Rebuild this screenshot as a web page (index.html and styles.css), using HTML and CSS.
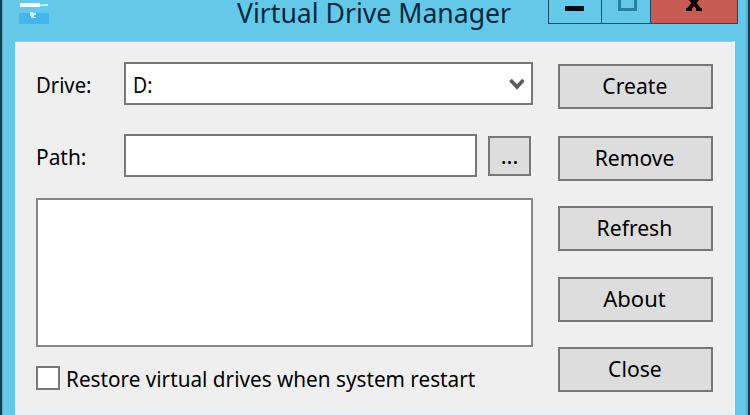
FILE: index.html
```html
<!DOCTYPE html>
<html lang="en">
<head>
<meta charset="utf-8">
<title>Virtual Drive Manager</title>
<link rel="stylesheet" href="styles.css">
</head>
<body>
<div class="window">
  <header class="titlebar">
    <svg class="app-icon" width="34" height="26" viewBox="0 0 34 26">
      <path d="M2 3 Q15 6 30 4 V6 H2Z" fill="#c5f5fa"/>
      <path d="M2 3H22V7H2Z" fill="#f2ffff"/>
      <path d="M1 8H31V24H1Z" fill="#45b6ed"/>
      <path d="M1 8H31V13H1Z" fill="#65c8f0"/>
      <path d="M12 12H15V13H18V15H16V17H18V18H13V16H12Z" fill="#c8f3ff"/>
    </svg>
    <h1 class="title"><span class="fit fit-title">Virtual Drive Manager</span></h1>
    <div class="controls">
      <div class="control min"><svg width="52" height="23" viewBox="0 0 52 23"><path d="M16 6H35V11H16Z" fill="#000b14"/></svg></div>
      <div class="control max"><svg width="48" height="23" viewBox="0 0 48 23"><path d="M17.500 -5H33.500V9.500H17.500Z" fill="none" stroke="#27809d" stroke-width="3"/></svg></div>
      <div class="control close"><svg width="86" height="23" viewBox="0 0 86 23"><path d="M38 -3L48 9M48 -3L38 9" fill="none" stroke="#0c0505" stroke-width="4"/><path d="M35 8H41V11H35ZM45 8H51V11H45Z" fill="#0c0505"/></svg></div>
    </div>
  </header>
  <main class="client">
    <section class="fields">
      <div class="row drive">
        <label class="label"><span class="fit fit-drive">Drive:</span></label>
        <div class="combo"><span class="fit fit-value">D:</span>
          <svg width="16" height="14" viewBox="0 0 16 14"><path d="M2.500 3L9 10L15.500 3" fill="none" stroke="#5b5b5b" stroke-width="3.6"/></svg>
        </div>
      </div>
      <div class="row path">
        <label class="label"><span class="fit fit-path">Path:</span></label>
        <div class="input"></div>
        <div class="browse">...</div>
      </div>
      <div class="list"></div>
      <div class="check"><div class="box"></div><span class="fit fit-check">Restore virtual drives when system restart</span></div>
    </section>
    <aside class="buttons">
      <div class="button"><span class="fit fit-button">Create</span></div>
      <div class="button"><span class="fit fit-button">Remove</span></div>
      <div class="button"><span class="fit fit-button">Refresh</span></div>
      <div class="button"><span class="fit">About</span></div>
      <div class="button"><span class="fit fit-button">Close</span></div>
    </aside>
  </main>
</div>
</body>
</html>
```
FILE: styles.css
```css
* { box-sizing: border-box; }
body { margin: 0; overflow: hidden; font-family: "Noto Sans", "Open Sans", sans-serif; font-size: 22px; color: #000; }
svg { display: block; }
.window { width: 750px; height: 415px; background: #64c8e8; border-left: 2px solid #0b4259; border-right: 2px solid #0b4259; box-shadow: inset 1px 0 #69a9be, inset -2px 0 #5aafcb; }
.titlebar { height: 41px; display: grid; grid-template-columns: 235px 311px 190px; align-items: start; }
.app-icon { margin-left: 16px; }
.title { margin: 0; font-size: 28px; font-weight: 400; line-height: 25px; color: #06283d; white-space: nowrap; }
.controls { display: flex; height: 24px; border: solid #174c66; border-width: 0 1px 1px; }
.control { height: 23px; overflow: hidden; }
.min { width: 53px; border-right: 1px solid #174c66; }
.max { width: 49px; border-right: 1px solid #174c66; }
.close { flex: 1; background: #c75a51; }
.client { margin-left: 13px; width: 720px; height: 374px; background: #f0efef; border-top: 1px solid #a4c5cf; border-right: 3px solid #e6f4f8; border-bottom: 1px solid #e4f0f5; display: flex; gap: 25px; padding: 20px 0 0 21px; }
.fields { width: 497px; }
.row { display: flex; align-items: center; height: 43px; }
.path { margin-top: 29px; }
.label { width: 88px; }
.fit { display: inline-block; white-space: nowrap; line-height: 30px; transform-origin: left; }
.title .fit { line-height: 25px; }
.fit-title { transform: scaleX(.95); }
.fit-drive { transform: scaleX(.92); }
.fit-path { transform: scaleX(.95); }
.fit-value { transform: scaleX(.88); }
.fit-check { transform: scaleX(.942); }
.fit-button { transform: scaleX(.96); transform-origin: center; }
.combo { width: 409px; height: 43px; border: 2px solid #777; background: #fff; display: flex; align-items: center; justify-content: space-between; padding: 0 7px; }
.input { width: 353px; height: 43px; border: 2px solid #777; background: #fff; }
.browse { margin-left: 11px; width: 43px; height: 40px; border: 2px solid #777; background: #ddd; text-align: center; line-height: 34px; }
.list { margin-top: 21px; height: 149px; border: 2px solid #868686; background: #fff; }
.check { margin-top: 19px; display: flex; align-items: center; height: 24px; gap: 6px; }
.box { width: 24px; height: 24px; flex: none; border: 2px solid #777; background: #fff; }
.buttons { padding-top: 2px; display: grid; grid-template-rows: 72px 70px 71px 70px 45px; }
.button { width: 155px; height: 45px; border: 2px solid #777; background: #ddd; display: flex; align-items: center; justify-content: center; padding: 0 2px 3px 0; }
```
